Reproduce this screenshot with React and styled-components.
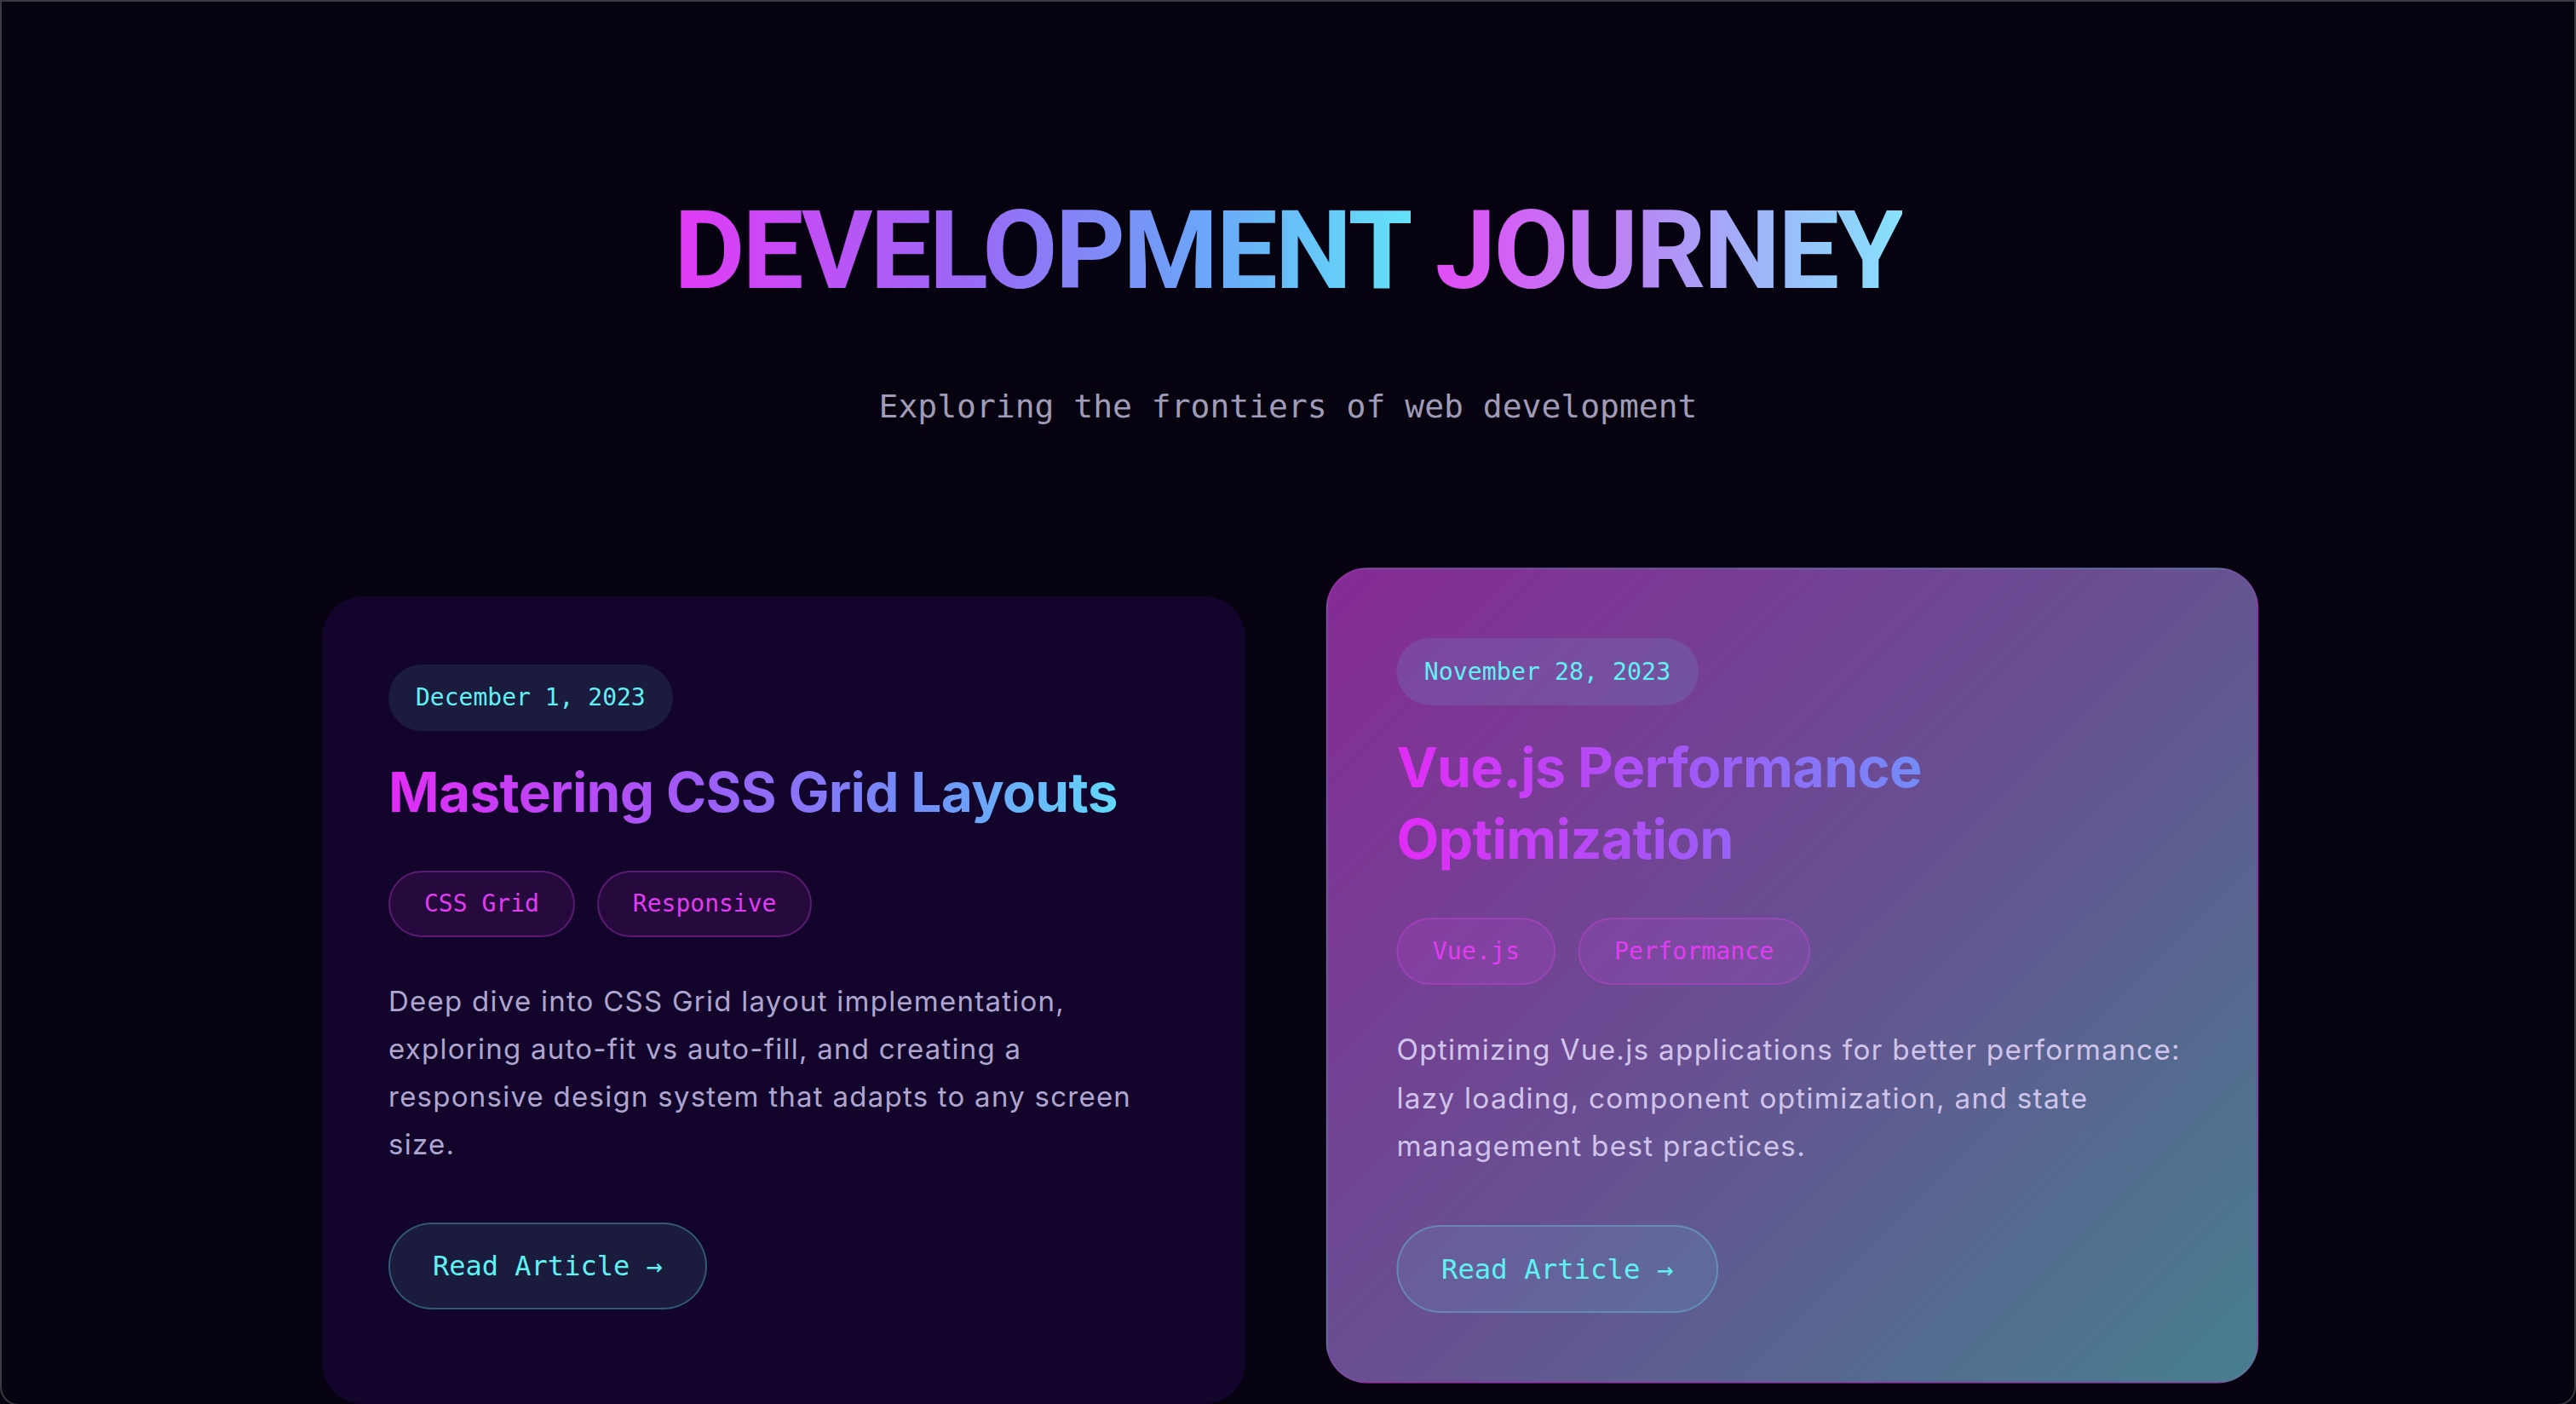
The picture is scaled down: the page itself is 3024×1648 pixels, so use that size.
import React from "react";
import styled, { createGlobalStyle } from "styled-components";

const GlobalStyle = createGlobalStyle`
  html, body { margin: 0; padding: 0; background: #07020f; }
  * { box-sizing: border-box; }
`;

const MONO = `"DejaVu Sans Mono", "Liberation Mono", monospace`;
const SANS = `Inter, "Noto Sans", sans-serif`;

const Frame = styled.div`
  min-height: 1648px;
  border: 2px solid #3c3b42;
  border-radius: 0 0 22px 22px;
  background: #07020f;
  display: flex;
  flex-direction: column;
  align-items: center;
  padding-top: 216px;
  overflow: hidden;
`;

const Header = styled.header`
  text-align: center;
`;

const Title = styled.h1`
  margin: 0;
  font-family: Roboto, ${SANS};
  font-weight: 700;
  font-size: 128px;
  line-height: 1.2;
  letter-spacing: -2.8px;
`;

const TitleWord = styled.span`
  background: ${(p) => p.$gradient};
  -webkit-background-clip: text;
  background-clip: text;
  color: transparent;
`;

const Subtitle = styled.p`
  margin: 77px 0 0;
  font-family: ${MONO};
  font-size: 38px;
  line-height: 57px;
  color: #a09cb8;
`;

const Grid = styled.main`
  width: 2268px;
  margin-top: 194px;
  display: grid;
  grid-template-columns: repeat(2, 1fr);
  gap: 100px;
`;

const Card = styled.article`
  display: flex;
  flex-direction: column;
  align-items: flex-start;
  padding: ${(p) => (p.$featured ? "80px" : "80px 78px")};
  border-radius: 48px;
  border: ${(p) => (p.$featured ? "2px solid rgba(217,70,239,0.18)" : "none")};
  background: ${(p) =>
    p.$featured
      ? "linear-gradient(135deg, #862a95 0%, #6a4c92 45%, #467f8e 100%)"
      : "#12042a"};
  transform: ${(p) => (p.$featured ? "translateY(-29px) scale(1.01)" : "none")};
`;

const DatePill = styled.span`
  font-family: ${MONO};
  font-size: 28px;
  line-height: 42px;
  padding: 18px 32px;
  border-radius: 999px;
  color: #62f0f4;
  background: rgba(103, 232, 249, ${(p) => (p.$featured ? 0.12 : 0.1)});
`;

const CardTitle = styled.h2`
  align-self: stretch;
  margin: 30px 0 0;
  font-family: ${SANS};
  font-weight: 700;
  font-size: 64px;
  line-height: 1.3;
  letter-spacing: -0.7px;
  background: linear-gradient(90deg, #e22cf6 0%, #a05af6 38%, #7090f8 68%, #62d8fa 92%, #67e8f9 100%);
  -webkit-background-clip: text;
  background-clip: text;
  color: transparent;
`;

const TagRow = styled.div`
  display: flex;
  gap: 26px;
  margin-top: 51px;
`;

const Tag = styled.span`
  font-family: ${MONO};
  font-size: 28px;
  line-height: 42px;
  padding: 16px 40px;
  border-radius: 999px;
  color: #e03cf2;
  background: rgba(217, 70, 239, ${(p) => (p.$featured ? 0.14 : 0.1)});
  border: 2px solid rgba(217, 70, 239, 0.3);
`;

const Description = styled.p`
  margin: 47px 0 0;
  font-family: ${SANS};
  font-size: 33px;
  line-height: 56px;
  letter-spacing: 1.25px;
  color: ${(p) => (p.$featured ? "#d0c4ea" : "#aea6cf")};
`;

const ReadButton = styled.button`
  margin-top: 64px;
  font-family: ${MONO};
  font-size: 32px;
  line-height: 50px;
  padding: 24px 50px;
  border-radius: 999px;
  color: #5ff2f2;
  background: rgba(103, 232, 249, 0.1);
  border: 2px solid rgba(103, 232, 249, 0.3);
  cursor: pointer;
`;

const posts = [
  {
    date: "December 1, 2023",
    title: "Mastering CSS Grid Layouts",
    tags: ["CSS Grid", "Responsive"],
    text: "Deep dive into CSS Grid layout implementation, exploring auto-fit vs auto-fill, and creating a responsive design system that adapts to any screen size.",
  },
  {
    date: "November 28, 2023",
    title: "Vue.js Performance Optimization",
    tags: ["Vue.js", "Performance"],
    text: "Optimizing Vue.js applications for better performance: lazy loading, component optimization, and state management best practices.",
    featured: true,
  },
];

export default function App() {
  return (
    <>
      <GlobalStyle />
      <Frame>
        <Header>
          <Title>
            <TitleWord $gradient="linear-gradient(90deg, #e23af6 0%, #9a68f6 40%, #6aa6f8 72%, #64e2f9 100%)">
              DEVELOPMENT
            </TitleWord>{" "}
            <TitleWord $gradient="linear-gradient(90deg, #e24cf5 0%, #b68af6 45%, #9eb6f9 70%, #86e2fc 100%)">
              JOURNEY
            </TitleWord>
          </Title>
          <Subtitle>Exploring the frontiers of web development</Subtitle>
        </Header>
        <Grid>
          {posts.map((p) => (
            <Card key={p.title} $featured={p.featured}>
              <DatePill $featured={p.featured}>{p.date}</DatePill>
              <CardTitle>{p.title}</CardTitle>
              <TagRow>
                {p.tags.map((t) => (
                  <Tag key={t} $featured={p.featured}>{t}</Tag>
                ))}
              </TagRow>
              <Description $featured={p.featured}>{p.text}</Description>
              <ReadButton>Read Article →</ReadButton>
            </Card>
          ))}
        </Grid>
      </Frame>
    </>
  );
}
